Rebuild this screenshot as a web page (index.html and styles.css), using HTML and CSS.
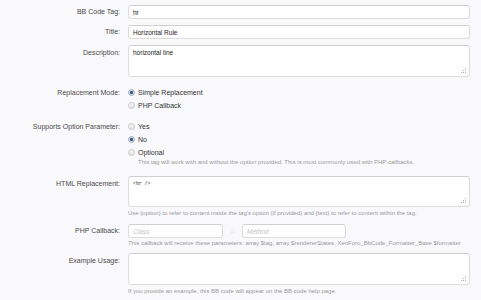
FILE: index.html
```html
<!DOCTYPE html>
<html lang="en">
<head>
    <meta charset="UTF-8">
    <title>Edit BB Code</title>
    <link rel="stylesheet" href="styles.css">
</head>
<body>
    <form class="form">
        <dl class="row">
            <dt>BB Code Tag:</dt>
            <dd><input type="text" class="text-input" value="hr"></dd>
        </dl>
        <dl class="row">
            <dt>Title:</dt>
            <dd><input type="text" class="text-input" value="Horizontal Rule"></dd>
        </dl>
        <dl class="row">
            <dt class="area-label">Description:</dt>
            <dd class="area-wrap">
                <textarea class="text-area">horizontal line</textarea>
                <span class="grip"></span>
            </dd>
        </dl>

        <dl class="row radio-row mode-row">
            <dt>Replacement Mode:</dt>
            <dd>
                <label class="option"><input type="radio" name="mode" checked> Simple Replacement</label>
                <label class="option"><input type="radio" name="mode"> PHP Callback</label>
            </dd>
        </dl>
        <dl class="row radio-row option-row">
            <dt>Supports Option Parameter:</dt>
            <dd>
                <label class="option"><input type="radio" name="opt"> Yes</label>
                <label class="option"><input type="radio" name="opt" checked> No</label>
                <label class="option"><input type="radio" name="opt"> Optional</label>
                <p class="hint indented">This tag will work with and without the option provided. This is most commonly used with PHP callbacks.</p>
            </dd>
        </dl>

        <dl class="row html-row">
            <dt class="area-label">HTML Replacement:</dt>
            <dd>
                <div class="area-wrap">
                    <textarea class="text-area code">&lt;hr /&gt;</textarea>
                    <span class="grip"></span>
                </div>
                <p class="hint">Use {option} to refer to content inside the tag's option (if provided) and {text} to refer to content within the tag.</p>
            </dd>
        </dl>
        <dl class="row callback-row">
            <dt>PHP Callback:</dt>
            <dd>
                <div class="callback">
                    <input type="text" class="text-input class-input" placeholder="Class">
                    <span class="sep">::</span>
                    <input type="text" class="text-input method-input" placeholder="Method">
                </div>
                <p class="hint">This callback will receive these parameters: array $tag, array $rendererStates, XenForo_BbCode_Formatter_Base $formatter</p>
            </dd>
        </dl>
        <dl class="row example-row">
            <dt class="area-label">Example Usage:</dt>
            <dd>
                <div class="area-wrap">
                    <textarea class="text-area"></textarea>
                    <span class="grip"></span>
                </div>
                <p class="hint">If you provide an example, this BB code will appear on the BB code help page.</p>
            </dd>
        </dl>
    </form>
</body>
</html>
```

FILE: styles.css
```css
body {
    margin: 0;
    background-color: #f9f9fb;
    font-family: "Liberation Sans", Arial, sans-serif;
    color: #333;
}
.form {
    padding-top: 5px;
}
.row {
    display: grid;
    grid-template-columns: 120px 342px;
    column-gap: 8px;
    margin: 0 0 6px 0;
}
.row dt {
    text-align: right;
    font-size: 7px;
    line-height: 14px;
    color: #4a4a4a;
}
.row dd {
    margin: 0;
}
.area-label {
    padding-top: 1px;
}
.text-input {
    box-sizing: border-box;
    display: block;
    width: 100%;
    height: 14px;
    margin: 0;
    padding: 0 4px;
    border: 1px solid #dcdcdc;
    border-top-color: #d0d0d0;
    border-radius: 3px;
    background-color: #fff;
    font-family: "Liberation Sans", Arial, sans-serif;
    font-size: 6.5px;
    color: #222;
    outline: none;
}
.text-input::placeholder {
    color: #c4c4c4;
    font-style: italic;
}
.area-wrap {
    position: relative;
}
.text-area {
    box-sizing: border-box;
    display: block;
    width: 100%;
    height: 32px;
    margin: 0;
    padding: 3px 4px;
    border: 1px solid #dcdcdc;
    border-top-color: #d0d0d0;
    border-radius: 3px;
    background-color: #fff;
    font-family: "Liberation Sans", Arial, sans-serif;
    font-size: 6.5px;
    color: #222;
    resize: none;
    outline: none;
}
.text-area.code {
    font-family: "Liberation Mono", "Courier New", monospace;
    font-size: 4.8px;
    padding-top: 4px;
}
/* dotted resize grip, drawn as 1px dots */
.grip {
    position: absolute;
    right: 4px;
    bottom: 4px;
    width: 1px;
    height: 1px;
    background-color: #b0b0b0;
    box-shadow: -2px 0 #b0b0b0, -4px 0 #b0b0b0, 0 -2px #b0b0b0, -2px -2px #b0b0b0, 0 -4px #b0b0b0;
}
.mode-row {
    margin-top: 9px;
    margin-bottom: 8px;
}
.radio-row dt {
    line-height: 13px;
}
.option {
    display: flex;
    align-items: center;
    height: 13px;
    font-size: 7px;
    color: #333;
}
.option input {
    appearance: none;
    box-sizing: border-box;
    width: 7px;
    height: 7px;
    margin: 0 3px 0 0;
    border: 1px solid #cacaca;
    border-radius: 50%;
    background: linear-gradient(#f6f6f6, #e4e4e4);
}
.option input:checked {
    border-color: #a6b3c2;
    background: radial-gradient(circle, #3a5677 0, #486589 1.2px, #c0ccda 2px, #e2e8ef 3px);
}
.hint {
    margin: 0;
    font-size: 6px;
    line-height: 7px;
    color: #9a9a9a;
}
.hint.indented {
    padding-left: 10px;
}
.option-row {
    margin-bottom: 10px;
}
.html-row .hint {
    margin-top: 3px;
}
.html-row {
    margin-bottom: 7px;
}
.html-row .text-area {
    height: 31px;
}
.callback {
    display: flex;
    align-items: center;
}
.class-input {
    width: 95px;
}
.method-input {
    width: 104px;
}
.sep {
    width: 19px;
    text-align: center;
    font-size: 6px;
    color: #bbb;
}
.callback-row .hint {
    margin-top: 2px;
}
.callback-row {
    margin-bottom: 6px;
}
.example-row .hint {
    margin-top: 3px;
}
```
